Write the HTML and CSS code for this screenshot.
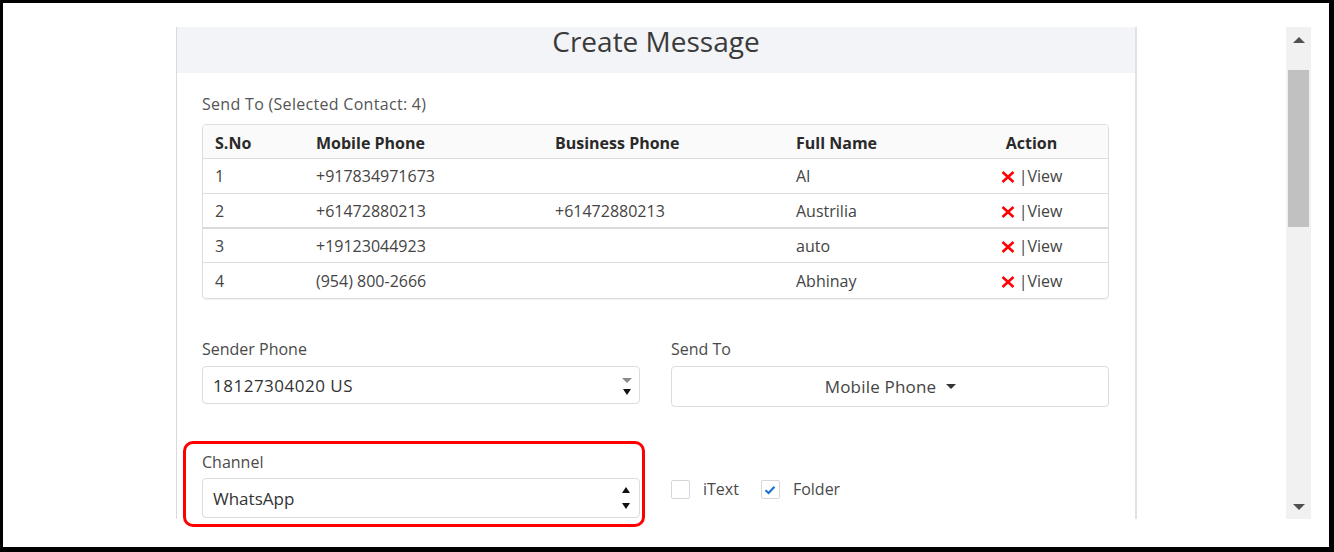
FILE: index.html
```html
<!DOCTYPE html>
<html lang="en">
<head>
<meta charset="utf-8">
<title>Create Message</title>
<link rel="stylesheet" href="styles.css">
</head>
<body>
<div class="frame">
  <div class="viewport">
    <section class="card">
      <header class="card-head"><h1>Create Message</h1></header>
      <div class="card-body">
        <div class="caption">Send To (Selected Contact: 4)</div>
        <div class="table-wrap">
          <table class="contacts">
            <colgroup>
              <col class="c-no"><col class="c-mobile"><col class="c-business"><col class="c-name"><col class="c-action">
            </colgroup>
            <thead>
              <tr><th>S.No</th><th>Mobile Phone</th><th>Business Phone</th><th>Full Name</th><th class="act">Action</th></tr>
            </thead>
            <tbody>
              <tr class="r1">
                <td>1</td><td>+917834971673</td><td></td><td>AI</td>
                <td class="act"><svg class="x" viewBox="0 0 14 12" width="14" height="12"><path d="M1.5 1 L12.5 11 M12.5 1 L1.5 11"/></svg>|View</td>
              </tr>
              <tr class="r2">
                <td>2</td><td>+61472880213</td><td>+61472880213</td><td>Austrilia</td>
                <td class="act"><svg class="x" viewBox="0 0 14 12" width="14" height="12"><path d="M1.5 1 L12.5 11 M12.5 1 L1.5 11"/></svg>|View</td>
              </tr>
              <tr class="r3">
                <td>3</td><td>+19123044923</td><td></td><td>auto</td>
                <td class="act"><svg class="x" viewBox="0 0 14 12" width="14" height="12"><path d="M1.5 1 L12.5 11 M12.5 1 L1.5 11"/></svg>|View</td>
              </tr>
              <tr class="r4">
                <td>4</td><td>(954) 800-2666</td><td></td><td>Abhinay</td>
                <td class="act"><svg class="x" viewBox="0 0 14 12" width="14" height="12"><path d="M1.5 1 L12.5 11 M12.5 1 L1.5 11"/></svg>|View</td>
              </tr>
            </tbody>
          </table>
        </div>

        <div class="form-row first">
          <div class="field">
            <div class="label">Sender Phone</div>
            <div class="select sender">
              <span>18127304020 US</span>
              <span class="spin">
                <svg width="10" height="5" viewBox="0 0 10 5"><path class="dim" d="M0 0 H10 L5 5 Z"/></svg>
                <svg width="10" height="6" viewBox="0 0 10 6"><path d="M1 0 H9 L5 6 Z"/></svg>
              </span>
            </div>
          </div>
          <div class="field">
            <div class="label">Send To</div>
            <div class="dropdown">Mobile Phone <svg class="caret" width="10" height="5" viewBox="0 0 10 5"><path d="M0 0 H10 L5 5 Z"/></svg></div>
          </div>
        </div>

        <div class="form-row second">
          <div class="field channel">
            <div class="label">Channel</div>
            <div class="select chan">
              <span>WhatsApp</span>
              <span class="spin wide">
                <svg width="8" height="6" viewBox="0 0 8 6"><path d="M4 0 L8 6 H0 Z"/></svg>
                <svg width="8" height="6" viewBox="0 0 8 6"><path d="M0 0 H8 L4 6 Z"/></svg>
              </span>
            </div>
          </div>
          <div class="checks">
            <label class="check"><span class="box"></span>iText</label>
            <label class="check"><span class="box on"><svg width="12" height="10" viewBox="0 0 12 10"><path d="M1.5 5.2 L4.6 8 L10.5 1.8"/></svg></span>Folder</label>
          </div>
        </div>
      </div>
    </section>

    <div class="scrollbar">
      <div class="sb-btn"><svg width="12" height="6" viewBox="0 0 12 6"><path d="M6 0 L12 6 H0 Z"/></svg></div>
      <div class="sb-track"><div class="sb-thumb"></div></div>
      <div class="sb-btn"><svg width="12" height="6" viewBox="0 0 12 6"><path d="M0 0 H12 L6 6 Z"/></svg></div>
    </div>
  </div>
</div>
</body>
</html>
```
FILE: styles.css
```css
* { box-sizing: border-box; }

html, body {
  margin: 0;
  padding: 0;
  background: #000;
}

body {
  font-family: "Open Sans", "Noto Sans", sans-serif;
  color: #3e3e3c;
}

.frame {
  width: 1334px;
  height: 552px;
  border-style: solid;
  border-color: #000;
  border-width: 3px 5px 5px 3px;
  background: #fff;
  padding: 24px 0 28px 0;
}

.viewport {
  height: 492px;
  display: flex;
  padding-left: 173px;
}

/* card */
.card {
  flex: none;
  width: 961px;
  height: 492px;
  border-left: 1px solid #dadada;
  border-right: 2px solid #e2e2e2;
}

.card-head {
  height: 46px;
  background: #f3f4f7;
  display: flex;
  justify-content: center;
  align-items: flex-start;
}

.card-head h1 {
  margin: -5px 0 0;
  font-weight: 400;
  font-size: 28px;
  line-height: 38px;
  color: #3a3a3a;
}

.card-body {
  padding: 21px 26px 0 25px;
}

.caption {
  font-size: 16px;
  letter-spacing: 0.3px;
  line-height: 20px;
  color: #555;
}

/* contacts table */
.table-wrap {
  margin-top: 10px;
  border: 1px solid #dcdde0;
  border-radius: 4px;
  overflow: hidden;
  box-shadow: 0 1px 1px rgba(0,0,0,0.05);
}

.contacts {
  width: 100%;
  border-collapse: separate;
  border-spacing: 0;
  table-layout: fixed;
  font-size: 16px;
}

.c-no { width: 101px; }
.c-mobile { width: 239px; }
.c-business { width: 241px; }
.c-name { width: 171px; }

.contacts th {
  background: #fafafa;
  font-weight: 700;
  color: #2a2a2a;
  text-align: left;
  padding: 3px 12px 0;
  line-height: 30px;
  border-bottom: 1px solid #dcdde0;
}

.contacts td {
  padding: 1px 12px 0;
  line-height: 33px;
  color: #444;
  border-bottom: 1px solid #dcdde0;
  white-space: nowrap;
}

.contacts tr.r2 td { border-bottom: 2px solid #d8dadd; line-height: 32px; }
.contacts tr.r3 td { line-height: 32px; }
.contacts tr.r4 td { border-bottom: 0; line-height: 34px; }

.contacts .act { text-align: center; }

.x {
  vertical-align: -1px;
  margin-right: 4px;
}
.x path {
  stroke: #ff0000;
  stroke-width: 2.5;
  fill: none;
}

/* form */
.form-row {
  display: flex;
  gap: 31px;
}
.form-row.first { margin-top: 40px; }
.form-row.second { margin-top: 45px; }

.field {
  flex: 0 0 438px;
  position: relative;
}

.label {
  font-size: 16px;
  line-height: 20px;
  color: #4a4a4a;
}

.select {
  margin-top: 7px;
  height: 38px;
  border: 1px solid #dcdcdc;
  border-radius: 4px;
  display: flex;
  align-items: center;
  justify-content: space-between;
  padding: 0 7px 0 10px;
  font-size: 17px;
  color: #333;
}

.select.sender { letter-spacing: 0.5px; }

.select.chan {
  margin-top: 6px;
  height: 40px;
}

.spin {
  display: flex;
  flex-direction: column;
  align-items: center;
  gap: 6px;
  margin-top: 2px;
}
.spin svg { display: block; }
.spin path { fill: #111; }
.spin path.dim { fill: #8a8a8a; }
.spin.wide { gap: 10px; margin-right: 2px; margin-top: 0; }

.dropdown {
  margin-top: 7px;
  height: 41px;
  border: 1px solid #dcdcdc;
  border-radius: 4px;
  display: flex;
  align-items: center;
  justify-content: center;
  gap: 10px;
  font-size: 17px;
  letter-spacing: 0.2px;
  color: #444;
  padding-left: 1px;
}
.caret path { fill: #333; }

/* annotation ring around the channel picker */
.channel::after {
  content: "";
  position: absolute;
  left: -19px;
  top: -11px;
  right: -5px;
  bottom: -9px;
  border: 3px solid #ff0000;
  border-radius: 10px;
  pointer-events: none;
}

.checks {
  display: flex;
  align-items: center;
  gap: 22px;
  margin-top: 28px;
  align-self: flex-start;
  font-size: 16px;
  line-height: 19px;
  color: #4a4a4a;
}

.check {
  display: flex;
  align-items: center;
  gap: 13px;
}

.box {
  width: 19px;
  height: 19px;
  border: 1px solid #d6d6d6;
  border-radius: 2px;
  display: flex;
  align-items: center;
  justify-content: center;
}
.box svg { display: block; }
.box path {
  fill: none;
  stroke: #1b73d2;
  stroke-width: 2.2;
}

/* scrollbar */
.scrollbar {
  flex: none;
  margin-left: auto;
  margin-right: 18px;
  width: 25px;
  height: 492px;
  background: #f1f1f1;
  display: flex;
  flex-direction: column;
}
.sb-btn {
  height: 25px;
  display: flex;
  align-items: center;
  justify-content: center;
}
.sb-btn svg { display: block; }
.sb-btn path { fill: #505050; }
.sb-track {
  flex: 1;
  padding: 18px 2px 0;
}
.sb-thumb {
  height: 157px;
  background: #c1c1c1;
}
```
